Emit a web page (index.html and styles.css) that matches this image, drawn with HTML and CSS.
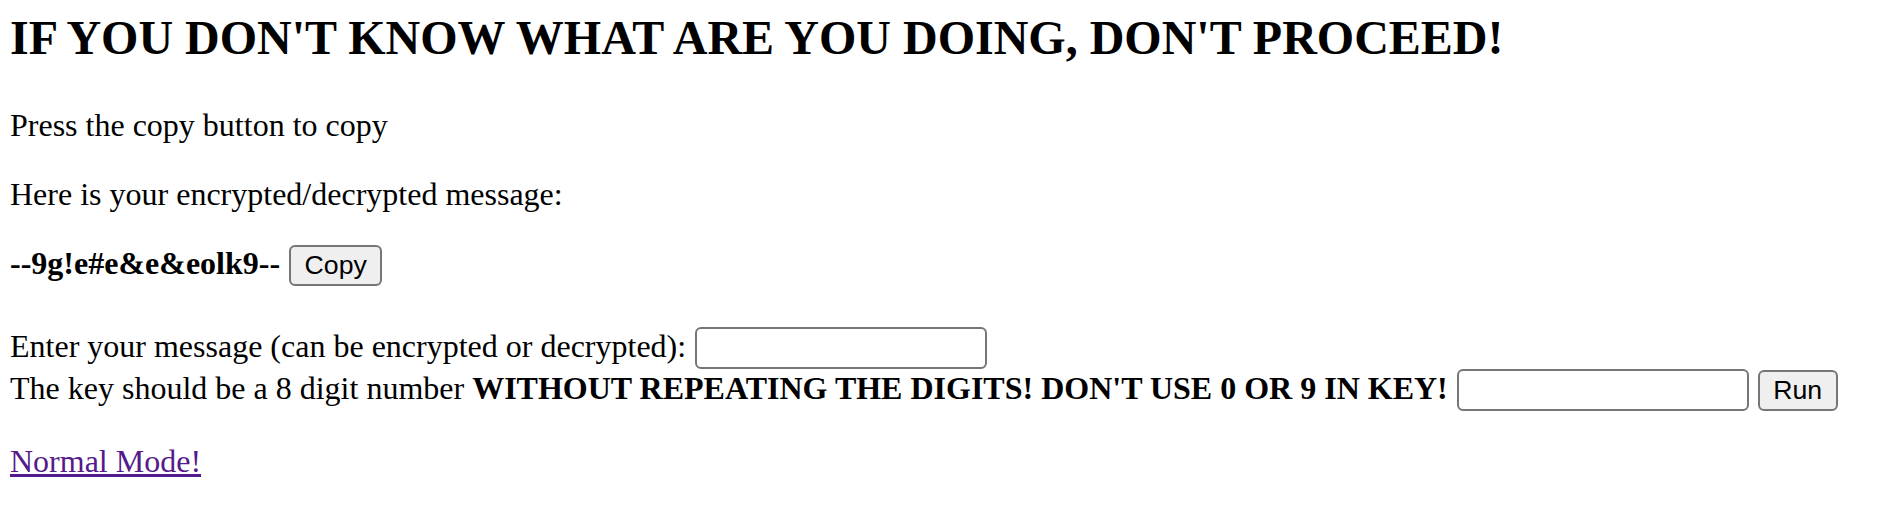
FILE: index.html
```html
<!DOCTYPE html>
<html lang="en">
<head>
<meta charset="utf-8">
<title>Encrypt / Decrypt</title>
<link rel="stylesheet" href="styles.css">
</head>
<body>
<h2 class="warning">IF YOU DON'T KNOW WHAT ARE YOU DOING, DON'T PROCEED!</h2>
<p class="text">Press the copy button to copy</p>
<p class="text">Here is your encrypted/decrypted message:</p>
<p class="text result"><b>--9g!e#e&amp;e&amp;eolk9--</b> <button class="btn" type="button">Copy</button></p>
<form class="form">Enter your message (can be encrypted or decrypted): <input class="field" type="text"><br>The key should be a 8 digit number <b>WITHOUT REPEATING THE DIGITS! DON'T USE 0 OR 9 IN KEY!</b> <input class="field" type="text"> <button class="btn" type="button">Run</button></form>
<p class="text"><a class="mode-link" href="#">Normal Mode!</a></p>
</body>
</html>
```
FILE: styles.css
```css
html, body {
  background: #ffffff;
}
body {
  margin: 10px;
  font-family: "Liberation Serif", "Times New Roman", serif;
  font-size: 32px;
  color: #000000;
}
.warning {
  font-size: 48px;
  font-weight: bold;
  margin: 0 0 42px;
}
.text {
  margin: 32px 0;
}
.form {
  margin: 41px 0 0;
}
.btn {
  box-sizing: border-box;
  height: 41.4px;
  padding: 0 13.5px;
  margin: 0 0 0 1px;
  font-family: "Liberation Sans", Arial, sans-serif;
  font-size: 26.67px;
  color: #000000;
  background: #efefef;
  border: 2px solid #767676;
  border-radius: 6px;
}
.field {
  box-sizing: border-box;
  width: 292px;
  height: 42px;
  margin: 0 0 0 1px;
  padding: 2px 4px;
  font-family: "Liberation Sans", Arial, sans-serif;
  font-size: 26.67px;
  background: #ffffff;
  border: 2px solid #767676;
  border-radius: 6px;
}
.mode-link {
  color: #551a8b;
}
```
